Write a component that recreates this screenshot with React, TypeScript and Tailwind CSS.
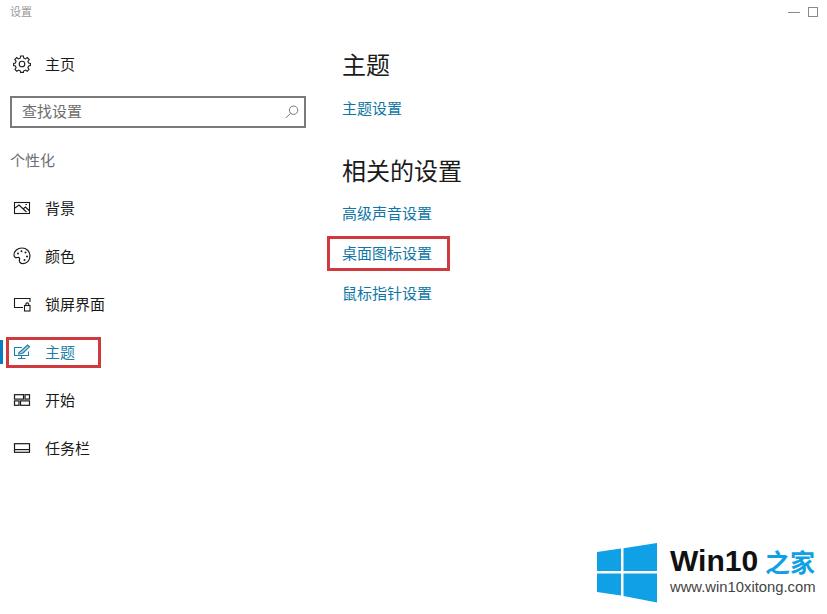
import React from "react";

const ImageIcon = () => (
  <svg width="18" height="14" viewBox="0 0 18 14" fill="none" stroke="currentColor" strokeWidth="1.1">
    <rect x="1.5" y="1.5" width="15" height="11" />
    <path d="M2 7 L6 4 L13.5 11 M10 8 L12.5 6 L16 9.5" />
    <path d="M12.5 3.5 H14" />
  </svg>
);

const GearIcon = () => (
  <svg width="18" height="18" viewBox="0 0 18 18" fill="none" stroke="currentColor" strokeWidth="1.1">
    <circle cx="9" cy="9" r="2.8" />
    <path d="M7.6 1 H10.4 L10.8 3.2 L12.5 3.9 L14.3 2.6 L16.2 4.6 L14.9 6.3 L15.6 8 L17.4 8.4 V10.6 L15.6 11 L14.9 12.8 L16 14.5 L14.2 16.3 L12.5 15.1 L10.8 15.8 L10.4 17.4 H7.6 L7.2 15.8 L5.5 15.1 L3.8 16.3 L2 14.5 L3.1 12.8 L2.4 11 L0.6 10.6 V8.4 L2.4 8 L3.1 6.3 L1.8 4.6 L3.7 2.6 L5.5 3.9 L7.2 3.2 Z" />
  </svg>
);

const PaletteIcon = () => (
  <svg width="18" height="18" viewBox="0 0 18 18" fill="none" stroke="currentColor" strokeWidth="1.2">
    <path d="M9 1 C4.5 1 1 4 1 8 C1 10.5 3 11 4.5 10.5 C6 10 7 11 6.5 12.5 C6 14.5 7 16.6 10 16.6 C14 16.6 17 13.2 17 8.8 C17 4.4 13.5 1 9 1 Z" />
    <circle cx="5" cy="6.5" r="1" fill="currentColor" stroke="none" />
    <circle cx="8.5" cy="4.2" r="1" fill="currentColor" stroke="none" />
    <circle cx="12.5" cy="5.5" r="1" fill="currentColor" stroke="none" />
    <circle cx="14" cy="9.5" r="1" fill="currentColor" stroke="none" />
    <circle cx="11.5" cy="13" r="1" fill="currentColor" stroke="none" />
  </svg>
);

const LockScreenIcon = () => (
  <svg width="18" height="15" viewBox="0 0 18 15" fill="none" stroke="currentColor" strokeWidth="1.1">
    <path d="M10 10.5 H1.5 V1.5 H17 V5" />
    <rect x="11.5" y="8.5" width="5.5" height="5.5" />
    <path d="M12.8 8.5 V7.2 C12.8 5.4 15.7 5.4 15.7 7.2 V8.5" />
  </svg>
);

const ThemeIcon = () => (
  <svg width="18" height="16" viewBox="0 0 18 16" fill="none" stroke="currentColor" strokeWidth="1.1">
    <path d="M9 3.5 H1.5 V11.5 H15.5 V7.5" />
    <path d="M8.5 14.5 V11.5 M5 14.5 H12.5" />
    <path d="M5.5 10 C5.5 8 7 7.8 8 7 L14.5 1 L16.5 2.8 L10 9 C8.5 10 7 10 5.5 10 Z" fill="currentColor" fillOpacity="0.35" />
  </svg>
);

const StartIcon = () => (
  <svg width="18" height="12" viewBox="0 0 18 12" fill="none" stroke="currentColor" strokeWidth="1.2">
    <rect x="1.5" y="0.7" width="9" height="4.4" />
    <rect x="12" y="0.7" width="4.5" height="4.4" />
    <rect x="1.5" y="6.9" width="4.5" height="4.4" />
    <rect x="7.5" y="6.9" width="9" height="4.4" />
  </svg>
);

const TaskbarIcon = () => (
  <svg width="18" height="10" viewBox="0 0 18 10" fill="none" stroke="currentColor" strokeWidth="1.2">
    <rect x="1.5" y="0.7" width="15" height="8.6" />
    <path d="M1.5 6.6 H16.5" />
  </svg>
);

const SearchIcon = () => (
  <svg width="14" height="14" viewBox="0 0 14 14" fill="none" stroke="#777777" strokeWidth="1">
    <circle cx="8.6" cy="5.2" r="4.2" />
    <path d="M5.6 8.2 L0.8 13" />
  </svg>
);

const WinLogo = () => (
  <svg width="60" height="60" viewBox="0 0 60 60" fill="#0fa0e6">
    <path d="M0 9 L24 5.6 V28 H0 Z" />
    <path d="M26.5 5.2 L60 0 V28 H26.5 Z" />
    <path d="M0 30.5 H24 V52.6 L0 49 Z" />
    <path d="M26.5 30.5 H60 V59.6 L26.5 53 Z" />
  </svg>
);

const navItems = [
  { label: "背景", icon: <ImageIcon /> },
  { label: "颜色", icon: <PaletteIcon /> },
  { label: "锁屏界面", icon: <LockScreenIcon /> },
  { label: "主题", icon: <ThemeIcon />, active: true },
  { label: "开始", icon: <StartIcon /> },
  { label: "任务栏", icon: <TaskbarIcon /> },
];

export default function App() {
  return (
    <div
      className="relative w-[827px] h-[614px] overflow-hidden bg-white text-[#1a1a1a]"
      style={{ fontFamily: '"Noto Sans CJK SC", "Noto Sans", sans-serif' }}
    >
      {/* title bar */}
      <div className="flex items-center justify-between h-6 pl-[10px] pr-[9px]">
        <span className="text-[11px] leading-[22px] h-6 text-[#9a9a9a]">设置</span>
        <div className="flex items-center gap-2">
          <div className="w-3 h-px bg-[#8a8a8a]" />
          <div className="w-[10px] h-[10px] border border-[#8a8a8a]" />
        </div>
      </div>

      <div className="flex">
        {/* sidebar */}
        <div className="w-[342px] shrink-0">
          <div className="flex items-center h-12 w-[320px] mt-4 pl-[13px]">
            <span className="flex justify-center w-[18px]"><GearIcon /></span>
            <span className="ml-[14px] text-[15px]">主页</span>
          </div>
          <div className="flex items-center justify-between ml-[10px] mt-2 w-[296px] h-8 border-[2px] border-[#7a7a7a] pl-[10px] pr-[5px]">
            <span className="text-[15px] leading-[26px] h-7 text-[#6e6e6e]">查找设置</span>
            <SearchIcon />
          </div>
          <div className="pl-[10px] mt-[20px] h-[25px] text-[15px] leading-6 text-[#6e6e6e]">个性化</div>
          <div className="mt-[11px]">
            {navItems.map((item) => (
              <div key={item.label} className={`relative flex items-center h-12 pl-[13px] ${item.active ? "text-[#1f7fa8]" : ""}`}>
                {item.active && (
                  <>
                    <div className="absolute left-0 top-[12px] w-[3px] h-6 bg-[#0a7cc4]" />
                    <div className="absolute left-[6px] top-[9px] w-[95px] h-[31px] border-[3px] border-[#d0393e]" />
                  </>
                )}
                <span className="flex justify-center w-[18px]">{item.icon}</span>
                <span className="ml-[14px] text-[15px]">{item.label}</span>
              </div>
            ))}
          </div>
        </div>

        {/* content */}
        <div className="flex-1 pt-[22px]">
          <h1 className="text-2xl leading-9">主题</h1>
          <div className="mt-[14px] text-[15px] leading-6 text-[#0f76a6]">主题设置</div>
          <h2 className="mt-[32px] text-2xl leading-9">相关的设置</h2>
          <div className="flex flex-col gap-4 mt-[13px] text-[15px] leading-6 text-[#0f76a6]">
            <div>高级声音设置</div>
            <div className="relative">
              桌面图标设置
              <div className="absolute left-[-15px] top-[-5px] w-[123px] h-[35px] border-[3px] border-[#d0393e]" />
            </div>
            <div>鼠标指针设置</div>
          </div>
        </div>
      </div>

      {/* watermark */}
      <div className="absolute right-0 bottom-0 w-[240px] h-[80px] flex items-start pl-[10px] pt-[9px]">
        <WinLogo />
        <div className="ml-[13px]" style={{ fontFamily: '"Liberation Sans", "Noto Sans CJK SC", sans-serif' }}>
          <div className="flex items-center h-[30px] mt-[3px] whitespace-nowrap">
            <span className="text-[30px] font-bold text-[#111111] leading-none">Win10</span>
            <span className="ml-[7px] text-[25px] font-bold text-[#0fa0e6] leading-none" style={{ fontFamily: '"Noto Sans CJK SC", sans-serif' }}>之家</span>
          </div>
          <div className="text-[14.8px] leading-4 mt-[3px] text-[#444444] whitespace-nowrap">www.win10xitong.com</div>
        </div>
      </div>
    </div>
  );
}
